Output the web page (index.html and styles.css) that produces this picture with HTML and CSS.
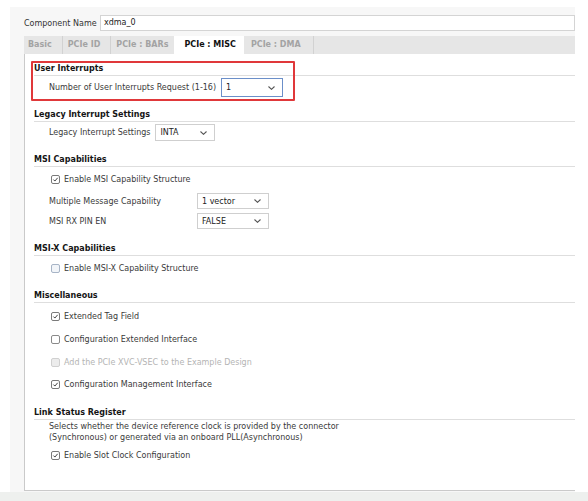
FILE: index.html
```html
<!DOCTYPE html>
<html>
<head>
<meta charset="utf-8">
<link rel="stylesheet" href="styles.css">
</head>
<body>
<div class="frame">
  <div class="name-row">
    <span class="name-label">Component Name</span>
    <div class="name-input">xdma_0</div>
  </div>
  <div class="tabs">
    <div class="tab first">Basic</div>
    <div class="tab">PCIe ID</div>
    <div class="tab before-active">PCIe : BARs</div>
    <div class="tab active">PCIe : MISC</div>
    <div class="tab last">PCIe : DMA</div>
  </div>
  <div class="panel">
    <div class="highlight"></div>

    <div class="sec-head s1">User Interrupts</div>
    <div class="row r-s1">
      <span class="label">Number of User Interrupts Request (1-16)</span>
      <div class="sel sel-focus w62">1<svg class="chev" viewBox="0 0 7 4"><polyline points="0.5,0.5 3.5,3.3 6.5,0.5"/></svg></div>
    </div>

    <div class="sec-head s2">Legacy Interrupt Settings</div>
    <div class="row r-s2">
      <span class="label">Legacy Interrupt Settings</span>
      <div class="sel w60">INTA<svg class="chev" viewBox="0 0 7 4"><polyline points="0.5,0.5 3.5,3.3 6.5,0.5"/></svg></div>
    </div>

    <div class="sec-head s3">MSI Capabilities</div>
    <div class="row check-row m5">
      <span class="cb checked"><svg viewBox="0 0 9 9"><polyline points="1.8,4.6 3.7,6.5 7.3,2.3"/></svg></span>
      <span>Enable MSI Capability Structure</span>
    </div>
    <div class="row m7">
      <span class="label col">Multiple Message Capability</span>
      <div class="sel w72 h16">1 vector<svg class="chev" viewBox="0 0 7 4"><polyline points="0.5,0.5 3.5,3.3 6.5,0.5"/></svg></div>
    </div>
    <div class="row m4">
      <span class="label col">MSI RX PIN EN</span>
      <div class="sel w72 h16">FALSE<svg class="chev" viewBox="0 0 7 4"><polyline points="0.5,0.5 3.5,3.3 6.5,0.5"/></svg></div>
    </div>

    <div class="sec-head s4">MSI-X Capabilities</div>
    <div class="row check-row m5">
      <span class="cb unchecked-blue"></span>
      <span>Enable MSI-X Capability Structure</span>
    </div>

    <div class="sec-head s5">Miscellaneous</div>
    <div class="row check-row m6">
      <span class="cb checked"><svg viewBox="0 0 9 9"><polyline points="1.8,4.6 3.7,6.5 7.3,2.3"/></svg></span>
      <span>Extended Tag Field</span>
    </div>
    <div class="row check-row m9">
      <span class="cb"></span>
      <span>Configuration Extended Interface</span>
    </div>
    <div class="row check-row m9 disabled">
      <span class="cb dis"></span>
      <span>Add the PCIe XVC-VSEC to the Example Design</span>
    </div>
    <div class="row check-row m8">
      <span class="cb checked"><svg viewBox="0 0 9 9"><polyline points="1.8,4.6 3.7,6.5 7.3,2.3"/></svg></span>
      <span>Configuration Management Interface</span>
    </div>

    <div class="sec-head s6">Link Status Register</div>
    <div class="desc">Selects whether the device reference clock is provided by the connector<br>(Synchronous) or generated via an onboard PLL(Asynchronous)</div>
    <div class="row check-row m5">
      <span class="cb checked"><svg viewBox="0 0 9 9"><polyline points="1.8,4.6 3.7,6.5 7.3,2.3"/></svg></span>
      <span>Enable Slot Clock Configuration</span>
    </div>
  </div>
</div>
<div class="bottom-band"></div>
</body>
</html>
```

FILE: styles.css
```css
html, body {
  margin: 0;
  padding: 0;
}
body {
  background: #ffffff;
  font-family: "DejaVu Sans", sans-serif;
  font-size: 8px;
  color: #3a3a3a;
  width: 588px;
  height: 501px;
  overflow: hidden;
}
.frame {
  margin: 7px 0 0 10px;
  width: 565px;
  height: 485px;
  background: #f7f7f7;
  display: flex;
  flex-direction: column;
}
.name-row {
  display: flex;
  align-items: center;
  height: 16px;
  margin-top: 8px;
  padding-left: 14px;
}
.name-label {
  width: 76px;
  color: #333;
  white-space: nowrap;
}
.name-input {
  flex: 1;
  height: 16px;
  box-sizing: border-box;
  border: 1px solid #d4d4d4;
  background: #fff;
  padding-left: 3px;
  line-height: 14px;
  color: #222;
}
.tabs {
  margin-top: 5px;
  margin-left: 14px;
  height: 18px;
  background: #e6e6e6;
  display: flex;
}
.tab {
  padding: 0 10px 0 5px;
  line-height: 18px;
  color: #a3a3a3;
  font-weight: bold;
  border-right: 1px solid #d2d2d2;
}
.tab.first { padding-left: 4px; }
.tab.before-active { border-right: none; padding-right: 6px; }
.tab.active {
  background: #fff;
  color: #111;
  border-right: none;
  padding: 0 8px 0 10px;
}
.tab.last { padding: 0 12px 0 7px; }
.panel {
  flex: 1;
  margin: 0 0 1px 14px;
  background: #fff;
  border-left: 1px solid #cacaca;
  border-bottom: 1px solid #cacaca;
  position: relative;
  padding: 8px 0 0 9px;
  display: flex;
  flex-direction: column;
}
.highlight {
  position: absolute;
  left: 6px;
  top: 7px;
  width: 264px;
  height: 40px;
  box-sizing: border-box;
  border: 2px solid #e0383a;
  border-radius: 1px;
}
.sec-head {
  font-weight: bold;
  color: #151515;
  line-height: 13px;
  border-bottom: 1px solid #dedede;
}
.s2 { margin-top: 11px; }
.s3 { margin-top: 12px; }
.s4 { margin-top: 13px; }
.s5 { margin-top: 14px; }
.s6 { margin-top: 15px; }

.row {
  display: flex;
  align-items: center;
  padding-left: 15px;
  min-height: 14px;
  white-space: nowrap;
}
.r-s1 { margin-top: 2px; }
.r-s2 { margin-top: 2px; }
.m4 { margin-top: 4px; }
.m5 { margin-top: 5px; }
.m6 { margin-top: 6px; }
.m7 { margin-top: 7px; }
.m8 { margin-top: 8px; }
.m9 { margin-top: 9px; }

.label { color: #3a3a3a; margin-right: 5px; }
.label.col { width: 148px; margin-right: 0; }

.sel {
  box-sizing: border-box;
  border: 1px solid #cfcfcf;
  background: #fff;
  display: flex;
  align-items: center;
  justify-content: space-between;
  padding: 0 7px 0 4px;
  color: #222;
  height: 17px;
}
.sel-focus {
  border-color: #6b8fc9;
  height: 19px;
}
.h16 { height: 16px; }
.w62 { width: 62px; }
.w60 { width: 60px; }
.w72 { width: 72px; }
.chev {
  width: 7px;
  height: 4px;
  fill: none;
  stroke: #555;
  stroke-width: 1.1;
}

.check-row { padding-left: 17px; }
.cb {
  width: 9px;
  height: 9px;
  box-sizing: border-box;
  border: 1px solid #8a8a8a;
  border-radius: 2px;
  background: #fff;
  margin-right: 4px;
  display: flex;
}
.cb svg {
  width: 100%;
  height: 100%;
  fill: none;
  stroke: #333;
  stroke-width: 1.2;
}
.cb.checked { border-color: #7a7a7a; }
.cb.unchecked-blue { border-color: #a7b4c6; background: #f2f5f9; }
.cb.dis { border-color: #d0d0d0; background: #ececec; }
.disabled { color: #b4b4b4; }

.desc {
  margin-top: 1px;
  padding-left: 15px;
  line-height: 11px;
  color: #3a3a3a;
  white-space: nowrap;
}
.bottom-band {
  height: 9px;
  background: #eef0ee;
}
```
